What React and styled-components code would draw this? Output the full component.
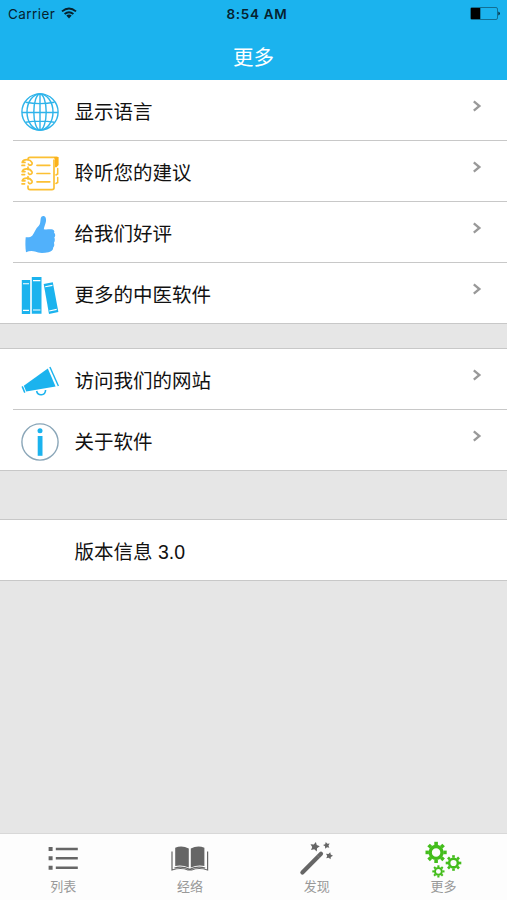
import React from "react";
import styled, { createGlobalStyle } from "styled-components";

const GlobalStyle = createGlobalStyle`
  * {
    box-sizing: border-box;
  }

  body {
    margin: 0;
    background: #e6e6e6;
    font-family: "Liberation Sans", "Noto Sans CJK SC", sans-serif;
  }
`;

const BLUE = "#1bb3ee";

// Row icons, all drawn on a 60x60 box (the row height)
const GlobeIcon = () => (
  <RowIcon viewBox="0 0 60 60" fill="none" stroke="#2fb4ea" strokeWidth="1.4">
    <circle cx="30" cy="32" r="18.1" />
    <ellipse cx="30" cy="32" rx="13" ry="18" />
    <ellipse cx="30" cy="32" rx="6.2" ry="18" />
    <path d="M30 14v36M12 32.5h36M15.5 22.3Q30 25 44.5 22.3M15.5 42.2Q30 40 44.5 42.2" />
  </RowIcon>
);

const NotebookIcon = () => (
  <RowIcon viewBox="0 0 60 60" fill="none" stroke="#fcc033" strokeWidth="1.7" strokeLinecap="round">
    <path d="M18 18.5Q18 16.4 20 16.4H47" />
    <path d="M44 19V47Q44 48.6 42 48.6H20Q18 48.6 18 46.5V45M18 26v2.5M18 35.5v2.5" />
    <path d="M43.8 16H48.6V24L46.5 26.3H45V19Z" fill="#fbb21b" stroke="none" />
    <path d="M47.7 27.5v5.5l-1.8 1M47.7 36.5v5l-1.8 1" strokeWidth="1.5" />
    <path d="M27 24.3H39.8M27 32.5H39.8M27 40.8H39.8" strokeWidth="1.7" />
    {[19, 28.2, 37.4].map((y) => (
      <path
        key={y}
        d={`M12.2 ${y + 2.4}C13.5 ${y - 1.2} 20 ${y - 1.2} 22 ${y + 2.6}C23 ${y + 5.2} 18.8 ${y + 6.2} 18.4 ${y + 4}M12 ${y + 5.4}H14.6M12.2 ${y + 2.4}H15`}
      />
    ))}
  </RowIcon>
);

const ThumbIcon = () => (
  <RowIcon viewBox="0 0 60 60" fill="#51b1fb">
    <path d="M30.8 16C31.3 14 33 13.5 34.4 14.2C36 15 36.3 17.3 35.9 19.7C35.5 22 34 25 33.8 27.2C37 27.8 40 26.8 42.6 27.6C44.6 28.2 44.6 30 44 30.7C45.7 31.8 45.5 34.6 44.3 35.6C45.2 37 44.9 39.8 43.9 40.8C44.6 42.4 44.4 44.6 43.2 45.6C43.3 48 41.5 49.6 38.5 50.2C33 51.4 28.4 51.2 25 49.6C22 48.3 19 49 16 50.2C15.3 46 15.2 39.5 15.7 35.2C18.5 35.4 21 35.2 22.4 33.5C24.4 31 25.6 26.6 28.8 23.8C30.5 22.3 30.2 18.8 30.8 16Z" />
  </RowIcon>
);

const BooksIcon = () => (
  <RowIcon viewBox="0 0 60 60" fill={BLUE}>
    <path d="M11.8 17h8.4v34h-8.4zM21.8 14h9.7v36.8h-9.7z" />
    <path d="M33.7 21L42.8 19.2L48.4 49L39 51Z" />
    <path
      d="M13 20.8h6M13 47.4h6M23 17.6h7.4M23 47h7.4M35.2 23.8L42.4 22.4M39.2 48L46.7 46.4"
      stroke="#fff"
      strokeWidth="1.1"
    />
  </RowIcon>
);

const MegaphoneIcon = () => (
  <RowIcon viewBox="0 0 60 60" fill={BLUE} stroke={BLUE}>
    <path d="M13.8 36.8L37.8 19.4L45.6 37.5L16.2 42.4Z" stroke="none" />
    <path d="M39.9 18L48.4 37" strokeWidth="1.4" />
    <path d="M12.2 37.4L14.8 43.6" strokeWidth="1.5" />
    <path d="M26.6 42C28 47.4 35.2 47 35.6 41" fill="none" strokeWidth="1.6" />
  </RowIcon>
);

const InfoIcon = () => (
  <RowIcon viewBox="0 0 60 60" fill={BLUE}>
    <circle cx="30" cy="32" r="18.1" fill="none" stroke="#8aa6b8" strokeWidth="1.4" />
    <circle cx="30" cy="20.8" r="2.5" />
    <path d="M27.7 26h4.8v19.8h-4.8z" />
  </RowIcon>
);

// Tab icons, 50x46
const ListIcon = () => (
  <TabIcon viewBox="0 0 50 46" fill="#666">
    {[15, 24.3, 33.7].map((y) => (
      <path key={y} d={`M10.6 ${y - 2}h4v4h-4zM17.8 ${y - 1.3}h22v2.6h-22z`} />
    ))}
  </TabIcon>
);

const BookIcon = () => (
  <TabIcon viewBox="0 0 50 46" fill="#666">
    <path d="M10.2 13.8Q17 11 23.8 14.6V33.6Q17 30.4 10.2 32Z" />
    <path d="M39.4 13.8Q32.6 11 25.8 14.6V33.6Q32.6 30.4 39.4 32Z" />
    <path
      d="M7 17.5V36Q16 33 23 36H26.6Q34 33 42.6 36V17.5M9.4 34Q17 31.8 24.8 35.3Q32 31.8 40.2 34"
      fill="none"
      stroke="#666"
      strokeWidth="1.2"
    />
  </TabIcon>
);

const points = (cx, cy, angles) =>
  angles.map(([a, r]) => `${cx + r * Math.cos(a)},${cy + r * Math.sin(a)}`).join(" ");

const Star = ({ cx, cy, r, turn }) => (
  <polygon
    points={points(
      cx,
      cy,
      Array.from({ length: 10 }, (_, i) => [turn + (i * Math.PI) / 5, i % 2 ? r * 0.52 : r])
    )}
  />
);

const WandIcon = () => (
  <TabIcon viewBox="0 0 50 46" fill="#666">
    <path d="M10.4 38.4L29 19.7" stroke="#666" strokeWidth="4.2" strokeLinecap="round" />
    <path d="M25 21.3L27.5 23.8" stroke="#999" strokeWidth="0.5" />
    <Star cx={22.8} cy={12.8} r={5} turn={-1.35} />
    <Star cx={34.6} cy={11.4} r={3.6} turn={-1.8} />
    <Star cx={37.2} cy={21.8} r={3.8} turn={-1.3} />
  </TabIcon>
);

const Gear = ({ cx, cy, r }) => (
  <g>
    <circle cx={cx} cy={cy} r={r * 0.56} fill="none" strokeWidth={r * 0.32} />
    {Array.from({ length: 8 }, (_, i) => (
      <path
        key={i}
        d={`M${cx - r * 0.17} ${cy - r * 0.68}v${-r * 0.32}h${r * 0.34}v${r * 0.32}z`}
        stroke="none"
        transform={`rotate(${i * 45} ${cx} ${cy})`}
      />
    ))}
  </g>
);

const GearsIcon = () => (
  <TabIcon viewBox="0 0 50 46" fill="#43bd1b" stroke="#43bd1b">
    <Gear cx={17.1} cy={18.4} r={10.6} />
    <Gear cx={34.5} cy={29} r={7.8} />
    <Gear cx={19.4} cy={37.4} r={6.1} />
  </TabIcon>
);

const Fila = ({ icon: Icon, texto }) => (
  <Row>
    <Icon />
    <RowBody>
      {texto}
      <Chevron viewBox="0 0 10 12">
        <path d="M1.8 1.4L7.4 6L1.8 10.6" />
      </Chevron>
    </RowBody>
  </Row>
);

const principales = [
  { icon: GlobeIcon, texto: "显示语言" },
  { icon: NotebookIcon, texto: "聆听您的建议" },
  { icon: ThumbIcon, texto: "给我们好评" },
  { icon: BooksIcon, texto: "更多的中医软件" },
];

const enlaces = [
  { icon: MegaphoneIcon, texto: "访问我们的网站" },
  { icon: InfoIcon, texto: "关于软件" },
];

const tabs = [
  { icon: ListIcon, texto: "列表" },
  { icon: BookIcon, texto: "经络" },
  { icon: WandIcon, texto: "发现" },
  { icon: GearsIcon, texto: "更多" },
];

const App = () => {
  return (
    <>
      <GlobalStyle />
      <Screen>
        <Header>
          <StatusBar>
            <Carrier>
              Carrier
              <svg width="16" height="12" viewBox="0 0 16 12" fill="none" stroke="#06222e" strokeWidth="1.9">
                <path d="M1 4.4Q8 -1.6 15 4.4M3.6 7Q8 3.3 12.4 7" />
                <path d="M5.3 8.6Q8 6.6 10.7 8.6L8 11.5Z" fill="#06222e" stroke="none" />
              </svg>
            </Carrier>
            <Clock>8:54 AM</Clock>
            <Battery>
              <svg width="31" height="13" viewBox="0 0 31 13">
                <rect x="0.5" y="0.5" width="27" height="12" rx="1.5" fill="none" stroke="#126f93" />
                <path d="M1 1h9.3v11H1z" />
                <path d="M28.5 4.5Q31 6.5 28.5 8.5Z" />
              </svg>
            </Battery>
          </StatusBar>
          <Title>更多</Title>
        </Header>

        <Section>
          {principales.map((f) => (
            <Fila key={f.texto} {...f} />
          ))}
        </Section>
        <Section $gap={24}>
          {enlaces.map((f) => (
            <Fila key={f.texto} {...f} />
          ))}
        </Section>
        <Section $gap={48}>
          <Version>版本信息 3.0</Version>
        </Section>

        <TabBar>
          {tabs.map(({ icon: Icon, texto }) => (
            <Tab key={texto}>
              <Icon />
              {texto}
            </Tab>
          ))}
        </TabBar>
      </Screen>
    </>
  );
};

export default App;

const Screen = styled.div`
  display: flex;
  flex-direction: column;
  width: 507px;
  height: 900px;
  overflow: hidden;
  background: #e6e6e6;
`;

const Header = styled.header`
  flex: none;
  height: 80px;
  background: ${BLUE};
`;

const StatusBar = styled.div`
  display: grid;
  grid-template-columns: 1fr auto 1fr;
  align-items: center;
  height: 27px;
  padding: 0 6px 0 8px;
  font-family: Inter, sans-serif;
  font-size: 13.5px;
  color: #06222e;
`;

const Carrier = styled.div`
  display: flex;
  align-items: center;
  gap: 6px;
  letter-spacing: 0.45px;

  svg {
    margin-top: -2px;
  }
`;

const Clock = styled.div`
  font-weight: 600;
  letter-spacing: 0.7px;
  margin-left: 5px;
`;

const Battery = styled.div`
  display: flex;
  justify-content: flex-end;
`;

const Title = styled.h1`
  margin: 0;
  padding-top: 3px;
  font-size: 20.5px;
  font-weight: 400;
  line-height: 56px;
  text-align: center;
  color: #fff;
`;

const Section = styled.section`
  flex: none;
  margin-top: ${({ $gap }) => $gap || 0}px;
  border-top: ${({ $gap }) => ($gap ? "1px solid #c8c8c8" : "none")};
  border-bottom: 1px solid #c8c8c8;
  background: #fff;
`;

const Row = styled.div`
  display: flex;
  height: 61px;
  margin-left: 13px;
  border-bottom: 1px solid #c8c8c8;

  &:last-child {
    height: 60px;
    border-bottom: none;
  }
`;

const RowIcon = styled.svg`
  flex: none;
  width: 60px;
  height: 60px;
  margin-left: -3px;
`;

const RowBody = styled.div`
  flex: 1;
  display: flex;
  justify-content: space-between;
  padding: 0 25px 0 4.5px;
  font-size: 19.5px;
  line-height: 64px;
  color: #111;
`;

const Chevron = styled.svg`
  width: 10px;
  height: 12px;
  margin-top: 19.5px;
  fill: none;
  stroke: #999;
  stroke-width: 2.3;
`;

const Version = styled.div`
  height: 60px;
  padding-left: 74.5px;
  font-size: 19.5px;
  line-height: 64px;
  color: #111;
`;

const TabBar = styled.nav`
  display: grid;
  grid-template-columns: repeat(4, 1fr);
  height: 67px;
  margin-top: auto;
  border-top: 1px solid #d8d8d8;
  background: #fdfdfd;
`;

const Tab = styled.div`
  display: flex;
  flex-direction: column;
  align-items: center;
  font-size: 13px;
  line-height: 14px;
  color: #999;
`;

const TabIcon = styled.svg`
  flex: none;
  width: 50px;
  height: 46px;
`;
